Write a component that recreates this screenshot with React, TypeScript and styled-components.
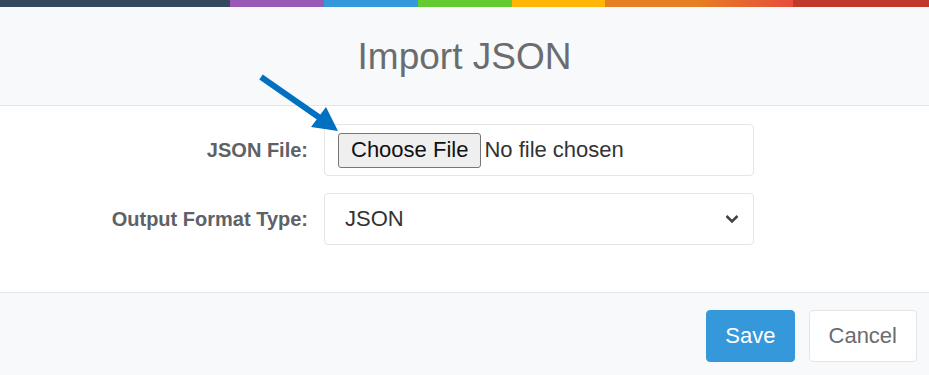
import React from "react";
import styled, { createGlobalStyle } from "styled-components";

const Global = createGlobalStyle`
  html, body { margin: 0; padding: 0; background: #ffffff; }
  body { font-family: "Liberation Sans", Arial, sans-serif; }
  * { box-sizing: border-box; }
`;

const Modal = styled.div`
  position: relative;
  width: 929px;
  height: 375px;
  overflow: hidden;
  background: #ffffff;
`;

const ColorBar = styled.div`
  display: flex;
  height: 7px;
`;

const Segment = styled.div<{ $w: number; $bg: string }>`
  width: ${(p) => p.$w}px;
  flex: none;
  background: ${(p) => p.$bg};
`;

const Header = styled.div`
  height: 99px;
  display: flex;
  align-items: center;
  justify-content: center;
  background: #f7f9fa;
  border-bottom: 1px solid #e4e5e7;
`;

const Title = styled.h4`
  margin: 0;
  font-size: 37px;
  font-weight: 400;
  color: #6a6c6f;
  line-height: 1;
`;

const Body = styled.div`
  padding: 18px 0 47px 0;
  display: grid;
  grid-template-columns: 308px 430px;
  column-gap: 16px;
  row-gap: 17px;
  align-items: center;
`;

const Label = styled.label`
  text-align: right;
  font-size: 20px;
  font-weight: 700;
  color: #5e6166;
`;

const Field = styled.div`
  height: 52px;
  border: 1px solid #e4e5e7;
  border-radius: 4px;
  background: #ffffff;
  display: flex;
  align-items: center;
  font-size: 22px;
  color: #333333;
`;

const FileField = styled(Field)`
  padding-left: 13px;
  gap: 3px;
`;

const ChooseButton = styled.button`
  height: 35px;
  padding: 0 12px;
  font-family: "Liberation Sans", Arial, sans-serif;
  font-size: 22px;
  color: #111111;
  background: #efefef;
  border: 1px solid #767676;
  border-radius: 3px;
`;

const SelectField = styled(Field)`
  padding: 0 14px 0 20px;
  justify-content: space-between;
`;

const Footer = styled.div`
  border-top: 1px solid #e4e5e7;
  background: #f7f9fa;
  height: 83px;
  padding: 17px 12px 0 0;
  display: flex;
  justify-content: flex-end;
  align-items: flex-start;
  gap: 14px;
`;

const Btn = styled.button<{ $primary?: boolean }>`
  height: 52px;
  padding: 0 ${(p) => (p.$primary ? 18 : 19)}px;
  font-family: "Liberation Sans", Arial, sans-serif;
  font-size: 22px;
  border-radius: 4px;
  border: 1px solid ${(p) => (p.$primary ? "#3498db" : "#e4e5e7")};
  background: ${(p) => (p.$primary ? "#3498db" : "#ffffff")};
  color: ${(p) => (p.$primary ? "#ffffff" : "#6a6c6f")};
`;

const ArrowOverlay = styled.svg`
  position: absolute;
  left: 0;
  top: 0;
  pointer-events: none;
`;

export default function App() {
  return (
    <>
      <Global />
      <Modal>
        <ColorBar>
          <Segment $w={230} $bg="#34495e" />
          <Segment $w={94} $bg="#9b59b6" />
          <Segment $w={94} $bg="#3498db" />
          <Segment $w={94} $bg="#62cb31" />
          <Segment $w={93} $bg="#ffb606" />
          <Segment
            $w={188}
            $bg="linear-gradient(to right, #e67e22 0%, #e67e22 50%, #e74c3c 100%)"
          />
          <Segment $w={136} $bg="#c0392b" />
        </ColorBar>
        <Header>
          <Title>Import JSON</Title>
        </Header>
        <Body>
          <Label>JSON File:</Label>
          <FileField>
            <ChooseButton type="button">Choose File</ChooseButton>
            <span>No file chosen</span>
          </FileField>
          <Label>Output Format Type:</Label>
          <SelectField>
            <span>JSON</span>
            <svg width="14" height="10" viewBox="0 0 14 10">
              <path
                d="M1.5 2 L7 7.5 L12.5 2"
                fill="none"
                stroke="#444"
                strokeWidth="2.6"
              />
            </svg>
          </SelectField>
        </Body>
        <Footer>
          <Btn $primary type="button">Save</Btn>
          <Btn type="button">Cancel</Btn>
        </Footer>
        <ArrowOverlay width="929" height="375" viewBox="0 0 929 375">
          <line
            x1="261"
            y1="77"
            x2="320"
            y2="118"
            stroke="#0070c0"
            strokeWidth="6"
            strokeLinecap="butt"
          />
          <polygon points="338,131 311,127 326,107" fill="#0070c0" />
        </ArrowOverlay>
      </Modal>
    </>
  );
}
